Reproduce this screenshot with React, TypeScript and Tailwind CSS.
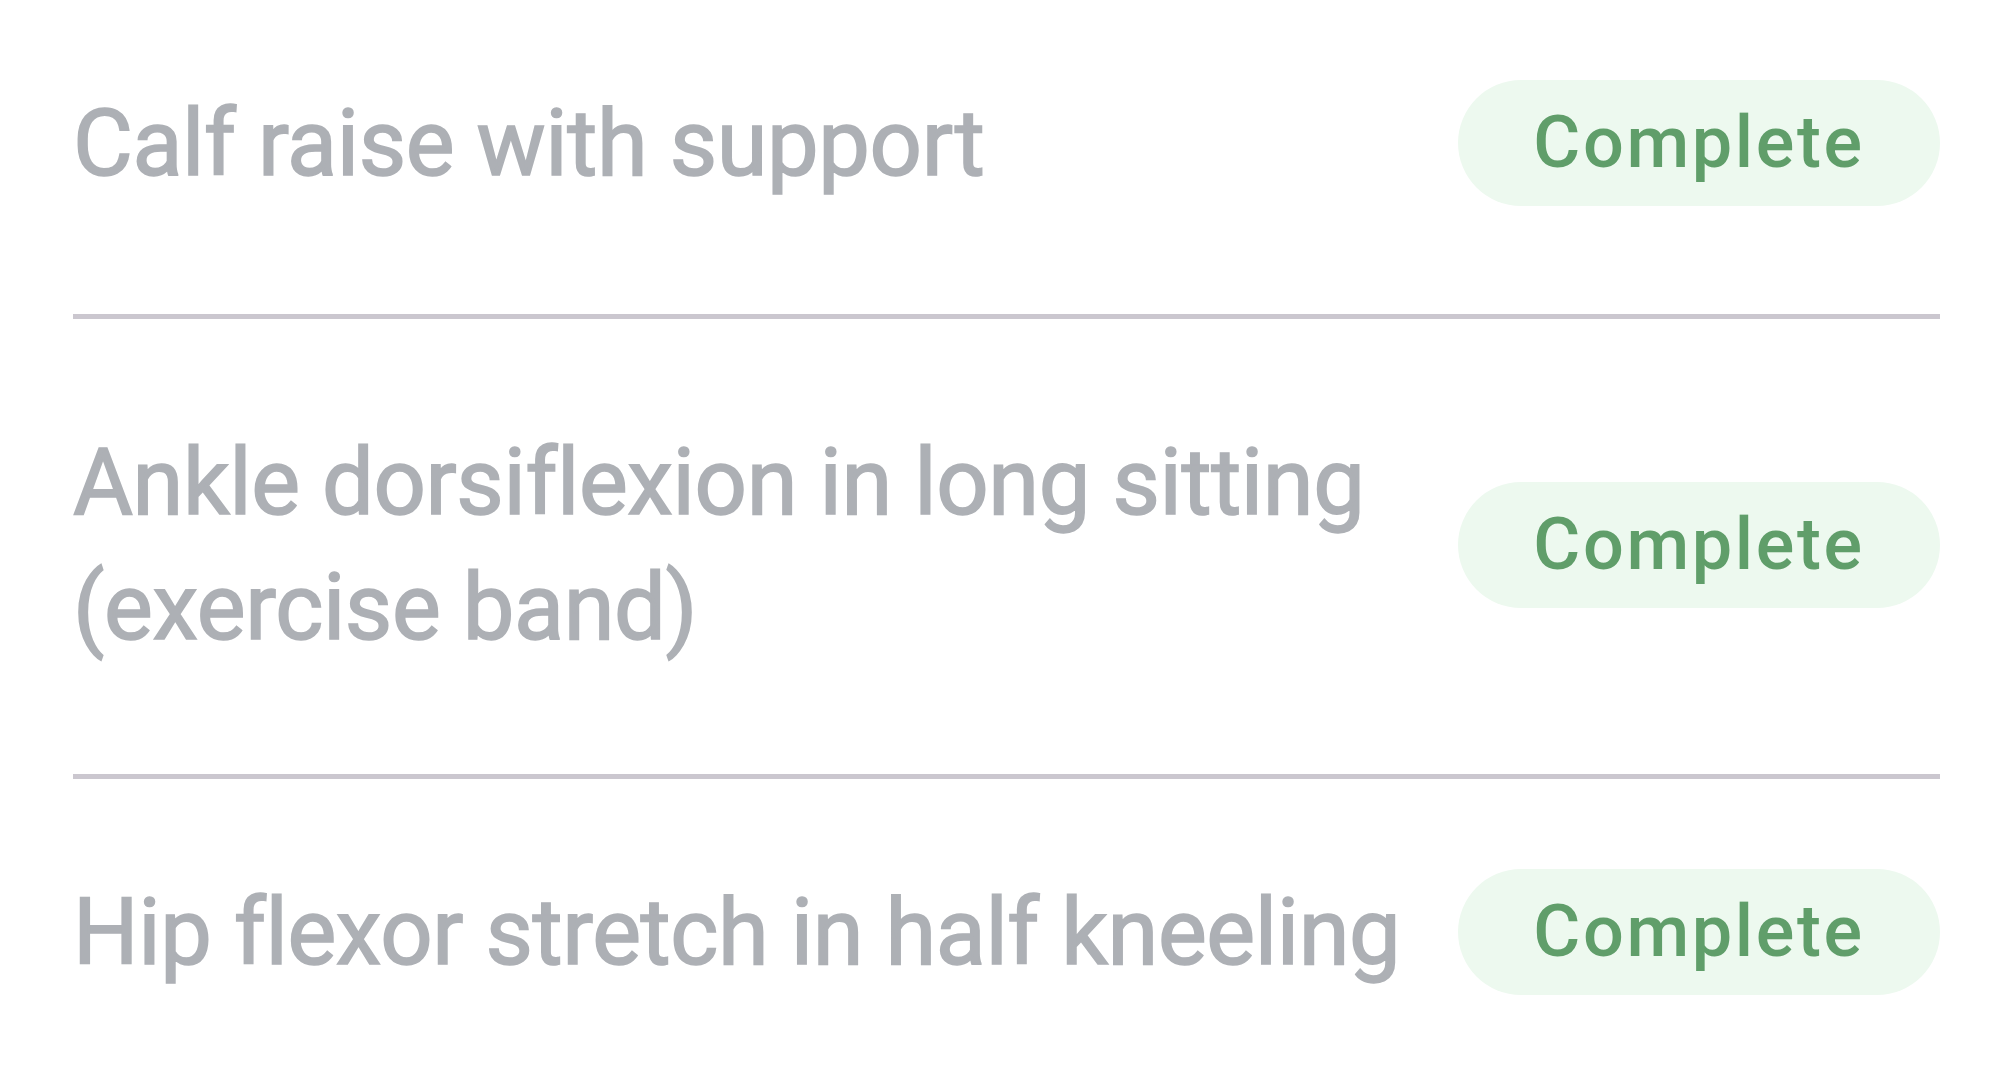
import React from "react";

function Pill() {
  return (
    <div className="flex h-[126px] w-[482px] shrink-0 items-center justify-center rounded-full bg-[#edf9ef]">
      <span className="text-[72px] font-medium leading-none tracking-[2.6px] text-[#609e6a]">
        Complete
      </span>
    </div>
  );
}

function Divider() {
  return <div className="h-[5px] w-full bg-[#cbc7cf]" />;
}

function Title({ children }: { children: React.ReactNode }) {
  return (
    <div className="flex-1 text-[92px] font-normal leading-[125px] tracking-[-0.4px] text-[#adb0b5] [-webkit-text-stroke:1.6px_#adb0b5]">
      {children}
    </div>
  );
}

export default function App() {
  const font = { fontFamily: "Roboto, 'Noto Sans', sans-serif" };
  return (
    <div
      className="min-h-[1069px] w-full overflow-hidden bg-white pl-[73px] pr-[59px]"
      style={font}
    >
      <div className="flex items-center justify-between gap-[16px] pt-[80px] pb-[108px]">
        <Title>Calf raise with support</Title>
        <Pill />
      </div>
      <Divider />
      <div className="flex items-center justify-between gap-[16px] pt-[101px] pb-[104px]">
        <Title>Ankle dorsiflexion in long sitting (exercise band)</Title>
        <Pill />
      </div>
      <Divider />
      <div className="flex items-center justify-between gap-[16px] pt-[90px] pb-[80px]">
        <Title>Hip flexor stretch in half kneeling</Title>
        <Pill />
      </div>
    </div>
  );
}
